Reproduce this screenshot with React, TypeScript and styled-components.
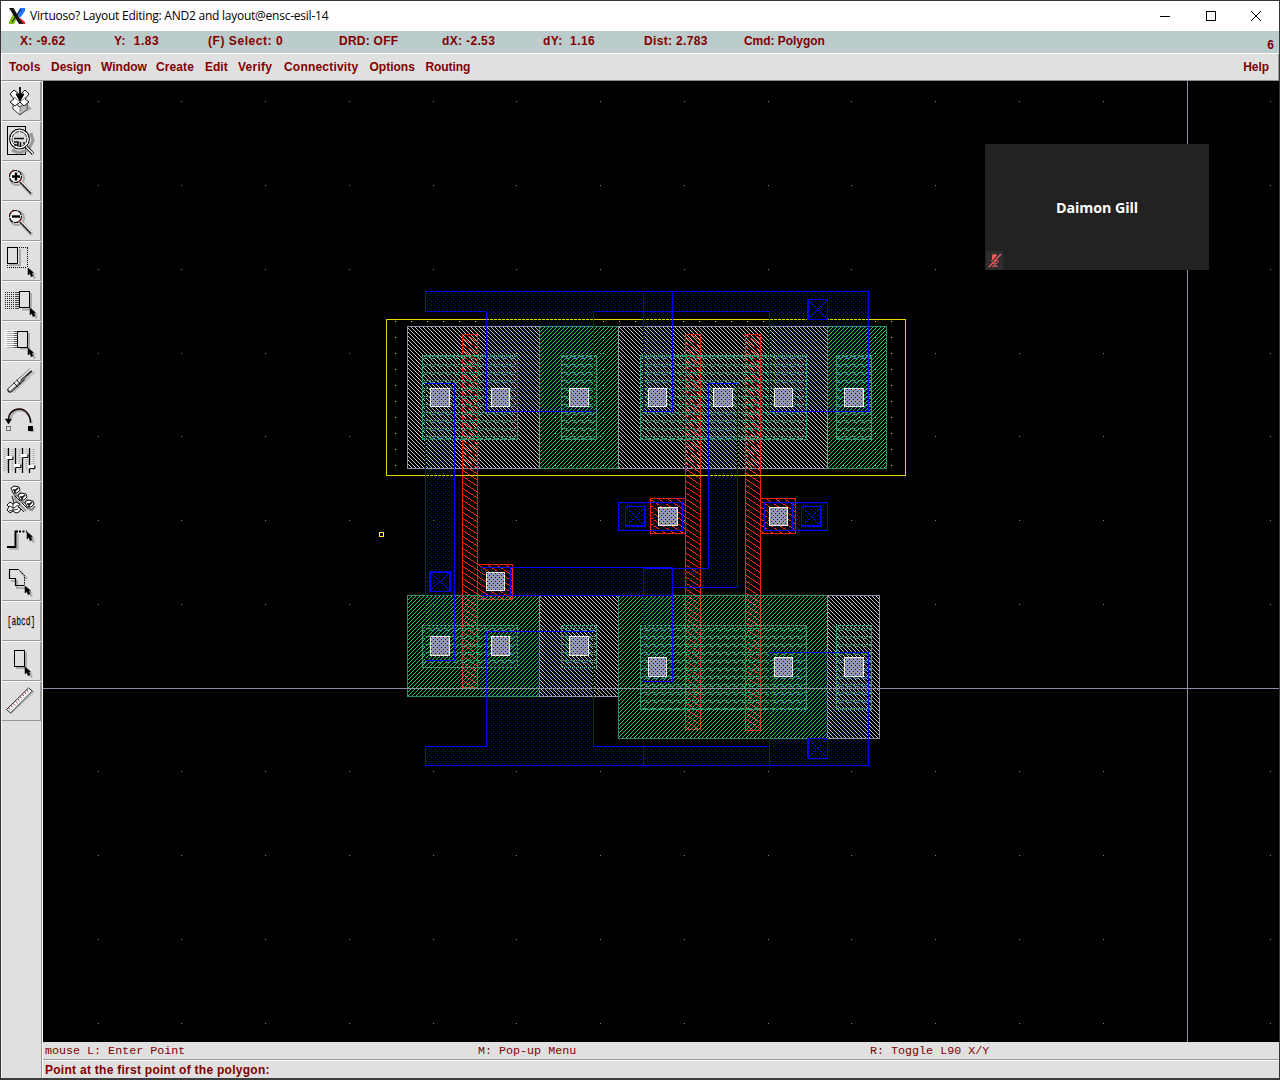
import React from "react";
import styled, { createGlobalStyle } from "styled-components";

const Global = createGlobalStyle`
  * { box-sizing: border-box; }
  html, body { margin: 0; padding: 0; background: #000; }
`;

const maroon = "#800000";
const panel = "#e0e0e0";
const bold = `bold 12px "Liberation Sans", Arial, sans-serif`;

const Window = styled.div`
  width: 1280px;
  height: 1080px;
  display: flex;
  flex-direction: column;
  overflow: hidden;
  background: ${panel};
  border: 1px solid #3b3538;
  border-bottom: 2px solid #3d3d3d;
`;

const TitleBar = styled.header`
  height: 30px;
  flex: none;
  display: flex;
  align-items: center;
  background: #fff;
  padding-left: 8px;
`;

const Title = styled.span<{ $spacing: string }>`
  margin-left: 5px;
  flex: 1;
  font: 12px "Open Sans", "Noto Sans", sans-serif;
  letter-spacing: ${(p) => p.$spacing};
  line-height: 16px;
  padding-bottom: 1px;
  color: #000;
  white-space: pre;
`;

const Controls = styled.div`
  display: flex;
  height: 29px;
`;

const WinButton = styled.div`
  width: 45.5px;
  display: flex;
  align-items: center;
  justify-content: center;
`;

const InfoBar = styled.div`
  height: 23px;
  flex: none;
  display: flex;
  background: #bccbcb;
  border-bottom: 1px solid #fff;
  color: ${maroon};
  font: ${bold};
  line-height: 20px;
  padding-left: 19px;
`;

const InfoItem = styled.span<{ $w: number; $spacing: number }>`
  width: ${(p) => p.$w}px;
  flex: none;
  white-space: pre;
  letter-spacing: ${(p) => p.$spacing}px;
`;

const WindowNumber = styled.span`
  margin-left: auto;
  padding: 4px 5px 0 0;
`;

const MenuBar = styled.nav`
  height: 27px;
  flex: none;
  display: flex;
  color: ${maroon};
  font: ${bold};
  line-height: 27px;
  border-left: 1px solid #fff;
  border-right: 1px solid #999;
  border-bottom: 1px solid #8e8e8e;
  padding: 0 9px 0 7px;
`;

const MenuItem = styled.span<{ $w?: number; $spacing?: number }>`
  ${(p) => (p.$w ? `width: ${p.$w}px;` : "margin-left: auto;")}
  flex: none;
  letter-spacing: ${(p) => p.$spacing ?? 0}px;
`;

const Body = styled.div`
  flex: 1;
  min-height: 0;
  display: flex;
`;

const ToolBar = styled.aside`
  width: 42px;
  flex: none;
  display: flex;
  flex-direction: column;
  border-left: 1px solid #f4f4f4;
  border-right: 1px solid #fff;
`;

const ToolFill = styled.div`
  flex: 1;
  border-right: 1px solid #999;
`;

const ToolButton = styled.div`
  height: 40px;
  flex: none;
  border-top: 1px solid #fff;
  border-right: 2px solid #999;
  border-bottom: 1px solid #999;
  display: flex;

  svg { display: block; overflow: visible; }
`;

const LabelGlyph = styled.span`
  width: 38px;
  height: 38px;
  flex: none;
  display: flex;
  align-items: center;
  justify-content: center;
  font: 13.5px "Liberation Mono", monospace;
  color: #000;
  text-shadow: 1px 1px 0 #bbb;
  transform: scaleX(0.58);
`;

const Main = styled.main`
  flex: 1;
  min-width: 0;
  display: flex;
  flex-direction: column;
`;

const Canvas = styled.div`
  position: relative;
  height: 961px;
  flex: none;
  background: #000;

  > svg { display: block; }
`;

const StatusBar = styled.div`
  height: 18px;
  flex: none;
  display: flex;
  padding-left: 2px;
  border-bottom: 1px solid #999;
  color: ${maroon};
  font: 11.7px "Liberation Mono", monospace;
  line-height: 18px;
  white-space: pre;
`;

const StatusItem = styled.span<{ $w: number }>`
  width: ${(p) => p.$w}px;
  flex: none;
`;

const Prompt = styled.div`
  flex: 1;
  border-top: 1px solid #fff;
  padding-left: 2px;
  color: ${maroon};
  font: ${bold};
  letter-spacing: 0.27px;
  line-height: 18px;
`;

const VideoTile = styled.div`
  position: absolute;
  left: 942px;
  top: 63px;
  width: 224px;
  height: 126px;
  background: #222;
  display: flex;
  align-items: center;
  justify-content: center;
  color: #fff;
  font: bold 14.3px "Open Sans", "Noto Sans", sans-serif;
  letter-spacing: -0.1px;
`;

const Muted = styled.div`
  position: absolute;
  left: 1px;
  bottom: 0;
  width: 17px;
  height: 19px;
  background: #2e2e2e;
`;

/* ---- toolbar icons, drawn in a 38x38 area starting at (2,2) ---- */

const Cursor = ({ x, y }: { x: number; y: number }) => (
  <g transform={`translate(${x} ${y})`}>
    <path d="M2 2l6 5h-2l2 3-2 1-2-3-2 2z" fill="#aaa" />
    <path d="M0 0L0 7L1.7 5.5L3.4 8.6L5 7.8L3.5 5L5.5 4.6z" fill="#000" stroke="#000" strokeWidth=".5" />
  </g>
);

const Lens = ({ plus }: { plus?: boolean }) => (
  <g fill="none">
    <path d="M22 25L32 35" stroke="#b5b5b5" strokeWidth="3" />
    <circle cx="17" cy="18" r="7" stroke="#aaa" strokeWidth="2" />
    <circle cx="15.5" cy="16.5" r="6" fill="#f2f2f2" stroke="#000" strokeWidth="1.2" strokeDasharray="5 1" />
    <path d="M10 14a6 6 0 0 1 4-4M18 22a6 6 0 0 0 3-3" stroke="#8a0000" strokeWidth="1" />
    <path d="M20.5 21.5L31.5 33" stroke="#222" strokeWidth="3" />
    <path d="M21 21L32 32.5" stroke="#fff" strokeWidth="1.2" />
    <path d={plus ? "M12 16.5h8M16 12.5v8" : "M12 16.5h8"} stroke="#000" strokeWidth="2.4" />
  </g>
);

const Nut = ({ x, y }: { x: number; y: number }) => (
  <g transform={`translate(${x} ${y})`}>
    <path d="M-2 4l5 2 3-4" stroke="#888" strokeWidth="2.2" fill="none" />
    <path d="M-4-2l3-2 5 1 1 3-3 3-4 0z" fill="#fff" stroke="#111" strokeWidth="1" />
    <path d="M-2 0h3l2-2M0 0v3" stroke="#111" strokeWidth="1.6" fill="none" />
  </g>
);

const rows = (x: number, x2: number, y: number, n: number) =>
  Array.from({ length: n }, (_, i) => `M${x} ${y + 2 * i}.5H${x2}`).join("");

const icons: React.ReactNode[] = [
  <g strokeLinejoin="miter">
    <path d="M19 35l13-6-5-5-8 7z" fill="#aaa" />
    <path d="M13 22v7l7 6 7-6v-8l-7 6z" fill="#fff" stroke="#333" strokeWidth="1" />
    <path d="M20 27v8l7-6v-8z" fill="#bbb" stroke="#555" strokeWidth=".7" />
    <path d="M10 14l4-4 6 5 5-5 4 4-4 5 4 3-5 4-4-4-5 4-5-4 4-3z" fill="#fff" stroke="#111" strokeWidth="1" />
    <path d="M14 17l6 5 6-5" stroke="#777" fill="none" />
    <path d="M20 7v10" stroke="#000" strokeWidth="1.8" />
    <path d="M16 14h2l2 3 2-3h2l-4 7z" fill="#000" stroke="#000" />
  </g>,
  <g fill="none">
    <rect x="7.5" y="6.5" width="18" height="28" stroke="#000" />
    <path d="M12 30l7 3 9-3 5-9-2-8" stroke="#999" strokeWidth="3" />
    <circle cx="19.5" cy="19" r="9.8" stroke="#111" strokeWidth="1.3" />
    <circle cx="19.5" cy="19" r="8.4" fill="#ddd" stroke="#fff" strokeWidth="1.5" />
    <circle cx="19.5" cy="19" r="7.4" stroke="#222" strokeWidth="1" strokeDasharray="4 1" />
    <path d="M14 18.5h10M20.5 22v5M14 22h4v3h-4M23 23h2" stroke="#111" strokeWidth="1.6" />
    <path d="M26.5 26.5L33 34" stroke="#222" strokeWidth="3.4" />
    <path d="M26 26.5L33 33.5" stroke="#fff" strokeWidth="1.2" />
  </g>,
  <Lens plus />,
  <Lens />,
  <g fill="none">
    <path d="M20 9v16H9" stroke="#aaa" strokeWidth="2" />
    <rect x="7.5" y="7.5" width="10" height="16" stroke="#000" />
    <path d="M19 7.5H28M27.5 8v19M7.5 25v2.5H27" stroke="#000" strokeDasharray="1 1" />
    <Cursor x={28} y={28} />
  </g>,
  <g fill="none">
    <path d={rows(5, 19, 12, 9)} stroke="#222" strokeDasharray="1 1" />
    <path d={rows(15, 19, 12, 9)} stroke="#444" />
    <path d="M22 29.5h9V13" stroke="#aaa" strokeWidth="2" />
    <rect x="19.5" y="11.5" width="10" height="16" stroke="#000" />
    <Cursor x={30} y={28} />
  </g>,
  <g fill="none">
    <path d={rows(4, 17, 10, 9)} stroke="#fff" />
    <path d={rows(7, 17, 11, 9)} stroke="#aaa" />
    <path d={rows(14, 17, 11, 9)} stroke="#555" />
    <path d="M20 28.5h9V13" stroke="#aaa" strokeWidth="2" />
    <rect x="17.5" y="11.5" width="10" height="16" stroke="#000" />
    <Cursor x={28} y={28} />
  </g>,
  <g fill="none" strokeLinecap="round">
    <path d="M13 32L34 12" stroke="#aaa" strokeWidth="3" strokeDasharray="1 1" strokeLinecap="butt" />
    <path d="M10 30L22 19" stroke="#222" strokeWidth="5.4" />
    <path d="M10 29.5L22 18" stroke="#eee" strokeWidth="3.2" />
    <path d="M20 20L31 10" stroke="#222" strokeWidth="4" strokeLinecap="butt" />
    <path d="M19 20L31 9" stroke="#ddd" strokeWidth="2" strokeLinecap="butt" />
    <path d="M11 31L26 17" stroke="#777" strokeWidth="1.3" />
    <path d="M14 23l4 4M17 20l3 4" stroke="#111" strokeWidth="1" />
  </g>,
  <g fill="none">
    <path d="M11 18c2-8 10-9 14-6s6 7 7 11" stroke="#aaa" strokeWidth="2" />
    <path d="M8.5 20c0-7 5-11 11-11s11 6 11 14" stroke="#000" strokeWidth="1.4" />
    <path d="M9 15c2-4 6-6 10-6s8 3 10 6" stroke="#8a0000" strokeWidth="1" strokeDasharray="1 2" />
    <path d="M5.5 19h6l-3 5z" fill="#000" stroke="#000" strokeWidth=".6" />
    <rect x="6.5" y="26.5" width="4" height="4" stroke="#000" strokeDasharray="1 1" />
    <path d="M30 31.5h4V28" stroke="#aaa" />
    <rect x="28" y="26" width="5" height="5" fill="#000" />
  </g>,
  <g fill="none">
    <path d="M4.5 8v24M7.5 9v22M12.5 9v22M19.5 9v22M26.5 9v22M33.5 9v22" stroke="#aaa" strokeDasharray="1 1" strokeWidth="2" />
    <path d="M8.5 8v25M15.5 8v25M22.5 8v25M29.5 8v25" stroke="#000" strokeWidth="1.3" />
    {[[6, 16], [14, 24], [21, 14], [28, 25]].map(([x, y]) => (
      <g key={x}>
        <rect x={x + 1} y={y + 1} width="6" height="3" fill="#777" />
        <rect x={x} y={y} width="6" height="3" fill="#fff" />
        <path d={`M${x + 2} ${y + 3.5}h5v-3`} stroke="#111" />
      </g>
    ))}
  </g>,
  <g fill="none">
    <path d="M15 15v4L26 31" stroke="#999" strokeWidth="2" />
    <path d="M12 16l2 7 5 4 5 5M13 14l14 14" stroke="#111" strokeWidth="1" />
    <Nut x={15} y={10} />
    <Nut x={22} y={17} />
    <Nut x={29} y={24} />
    <path d="M7 25l3-3 3 2 3-2 4 2-2 3 3 2-2 3-3 1-3-2-3 2-3-3 2-3z" fill="#fff" stroke="#111" />
    <path d="M9 26l5 2 4-3M13 24v8M9 31l9-2" stroke="#333" />
  </g>,
  <g fill="none">
    <path d="M9 29h9V14" stroke="#aaa" strokeWidth="1.5" />
    <path d="M7 27H15.5V11.5H18" stroke="#000" strokeWidth="2" />
    <path d="M19 11.5H27" stroke="#000" strokeWidth="2" strokeDasharray="2 1.5" />
    <Cursor x={27} y={12} />
  </g>,
  <g fill="none">
    <path d="M11 21h6v7h8M20 11l7 8" stroke="#aaa" strokeWidth="2" />
    <path d="M24.5 25.5H15.5V18.5H9.5V9.5H18.5" stroke="#000" strokeWidth="1.2" />
    <path d="M18.5 9.5L24.5 15.5V25" stroke="#000" strokeDasharray="1.5 1" />
    <Cursor x={25} y={26} />
  </g>,
  null,
  <g fill="none">
    <path d="M16 28h10V12" stroke="#aaa" strokeWidth="2" />
    <rect x="14.5" y="10.5" width="10" height="16" stroke="#000" />
    <Cursor x={25} y={27} />
  </g>,
  <g fill="none">
    <path d="M11 33L34 12" stroke="#aaa" strokeWidth="2" strokeDasharray="1 1" />
    <path d="M6.5 29.5L28.5 8L32.5 11L10.5 33z" fill="#fff" stroke="#222" strokeWidth="1" />
    <path d="M9 29L28.5 10" stroke="#8a3030" strokeWidth="1.6" strokeDasharray="1 2.2" />
    <path d="M10.5 30L30 11.5" stroke="#555" strokeWidth="1" strokeDasharray="1 2" />
  </g>,
];

/* ---- layout geometry; each box is [x1, y1, x2, y2] in window pixels ---- */

type Box = [number, number, number, number];

const outline = ([a, b, c, d]: Box) => ({ x: a + 0.5, y: b + 0.5, width: c - a, height: d - b });

const Boxes = ({ items, fill, stroke }: { items: Box[]; fill: string; stroke: string }) => (
  <>
    {items.map((b, i) => (
      <rect key={i} {...outline(b)} fill={`url(#${fill})`} stroke={stroke} />
    ))}
  </>
);

const nImplant: Box[] = [[407, 326, 539, 468], [618, 326, 827, 468], [539, 595, 618, 696], [827, 595, 879, 738]];
const pImplant: Box[] = [[539, 326, 618, 468], [827, 326, 886, 468], [407, 595, 539, 696], [618, 595, 827, 738]];
const diffusion: Box[] = [
  [422, 355, 517, 439], [561, 355, 596, 439], [640, 355, 806, 439], [836, 355, 871, 439],
  [422, 625, 517, 667], [561, 625, 596, 667], [640, 625, 806, 709], [836, 625, 871, 709],
];
const poly: Box[] = [
  [462, 334, 477, 687], [685, 334, 700, 729], [745, 334, 760, 730],
  [650, 498, 685, 533], [760, 498, 795, 533], [477, 564, 512, 599],
];
const metal: Box[] = [
  [643, 291, 672, 411], [425, 383, 454, 660], [481, 567, 672, 595], [643, 567, 672, 681],
  [618, 502, 682, 530], [764, 502, 827, 530],
];
const contacts: Box[] = [
  [430, 388, 449, 406], [491, 388, 509, 406], [569, 388, 588, 406], [648, 388, 666, 406],
  [713, 388, 732, 406], [774, 388, 792, 406], [844, 388, 863, 406],
  [658, 507, 677, 525], [769, 507, 787, 525], [486, 572, 504, 590],
  [430, 636, 449, 655], [491, 636, 509, 655], [569, 636, 588, 655],
  [648, 657, 666, 676], [774, 657, 792, 676], [844, 657, 863, 676],
];
const pins: { box: Box; heavy: string; faint?: boolean }[] = [
  { box: [807, 299, 827, 319], heavy: "M808.5 299v20" },
  { box: [625, 506, 645, 526], heavy: "M644.5 506v20M625 525.5h20", faint: true },
  { box: [801, 506, 821, 526], heavy: "M820.5 506v20M801 525.5h20", faint: true },
  { box: [429, 571, 450, 591], heavy: "M430.5 571v20M449.5 571v20M429 572.5h21" },
  { box: [807, 738, 827, 758], heavy: "M808.5 738v20", faint: true },
];
const gridX = [98, 181, 265, 349, 433, 516, 600, 684, 768, 851, 935, 1019, 1103, 1270];
const gridY = [101, 185, 269, 353, 436, 520, 604, 771, 855, 939, 1023];

const px = (pts: number[][]) => pts.map(([x, y]) => `M${x} ${y}h1v1h-1z`).join("");

const polyDiag = Array.from({ length: 9 }, (_, i) => [i, Math.floor((i * 2) / 3)]);

/* pixel-stepped diagonals of a pin marker; faint ones leave out every third step */
const cross = ([x1, y1, x2, y2]: Box, faint?: boolean) => {
  const n = x2 - x1;
  const pts: number[][] = [];
  for (let i = 1; i < n; i++) {
    if (faint && i % 3 === 0) continue;
    const y = Math.round((i * (y2 - y1)) / n);
    pts.push([x1 + i, y1 + y], [x1 + i, y2 - y]);
  }
  return px(pts);
};

const LayoutView = () => (
  <svg width="1236" height="961" viewBox="43 81 1236 961" shapeRendering="crispEdges">
    <defs>
      <pattern id="metal" patternUnits="userSpaceOnUse" x="3" y="1" width="4" height="4">
        <path d={px([[0, 0], [2, 2]])} fill="#0000ff" />
      </pattern>
      <pattern id="nimp" patternUnits="userSpaceOnUse" width="4" height="4">
        <path d={px([[0, 0], [1, 1], [2, 2], [3, 3]])} fill="#c8c8c8" />
      </pattern>
      <pattern id="pimp" patternUnits="userSpaceOnUse" width="4" height="4">
        <path d={px([[3, 0], [2, 1], [1, 2], [0, 3]])} fill="#14c864" />
      </pattern>
      <pattern id="poly" patternUnits="userSpaceOnUse" width="9" height="6">
        <path d={px(polyDiag)} fill="#ff2814" />
      </pattern>
      <pattern id="diff" patternUnits="userSpaceOnUse" x="2" y="4" width="8" height="8">
        <path d="M0 0h5v1h-5zM4 1h1v2h-1zM5 2h3v1h-3zM7 1h1v1h-1z" fill="#329678" />
      </pattern>
      <pattern id="well" patternUnits="userSpaceOnUse" x="395" y="321" width="16" height="16">
        <path d="M0 0h1v1h-1z" fill="#e6dc00" />
      </pattern>
      <pattern id="cut" patternUnits="userSpaceOnUse" x="3" y="1" width="4" height="4">
        <rect width="4" height="4" fill="#9696b4" />
        <path d={px([[0, 0], [2, 2]])} fill="#0000dc" />
      </pattern>
    </defs>

    <path d={px(gridX.flatMap((x) => gridY.map((y) => [x, y])))} fill="#82828c" />

    <Boxes items={nImplant} fill="nimp" stroke="#9191a5" />
    <Boxes items={poly} fill="poly" stroke="#eb1e0a" />
    <Boxes items={pImplant} fill="pimp" stroke="#288c6e" />
    <Boxes items={diffusion} fill="diff" stroke="#32966e" />
    <path d="M539.5 326V469M618.5 326V469M827.5 326V469M539.5 595V697M827.5 595V739" stroke="#9191a5" />
    <path d="M387 320h518v6H387zM387 326h20v149H387zM887 326h18v149H887zM540 326h78v142H540zM828 326h58v142H828z" fill="url(#well)" />
    <rect x="386.5" y="319.5" width="519" height="156" fill="none" stroke="#e6d200" />

    <path
      d="M425.5 291.5H868.5V411.5H769.5V311.5H593.5V411.5H486.5V311.5H425.5z"
      fill="url(#metal)" stroke="#0000ff"
    />
    <path
      d="M425.5 746.5H486.5V631.5H593.5V746.5H769.5V652.5H868.5V765.5H425.5z"
      fill="url(#metal)" stroke="#0000ff"
    />
    <path d="M643.5 568.5H708.5V383.5H737.5V587.5H643.5z" fill="url(#metal)" />
    <path d="M643.5 568.5H708.5V383.5H737.5V587.5H672" fill="none" stroke="#0000ff" />
    <Boxes items={metal} fill="metal" stroke="#0000ff" />
    <path d="M643.5 746V765M769.5 746V765M653.5 502V530M792.5 502V530M510.5 567V595" stroke="#0000ff" />

    {pins.map(({ box, heavy, faint }) => (
      <g key={box.join()}>
        <rect {...outline(box)} fill="none" stroke="#0000ff" />
        <path d={heavy} fill="none" stroke="#0000ff" />
        <path d={cross(box, faint)} fill="#0000ff" />
      </g>
    ))}

    <path d="M43 688.5H1279M1187.5 81V1042" stroke="#8c8ca8" />

    {contacts.map((b) => (
      <g key={b.join()}>
        <rect {...outline(b)} fill="url(#cut)" stroke="#c8c8e6" />
        <rect {...outline(b)} fill="none" stroke="#fff" strokeDasharray="3 1" />
      </g>
    ))}

    <rect x="379.5" y="532.5" width="4" height="4" fill="none" stroke="#ffff00" />
  </svg>
);

const menus: [string, number, number][] = [
  ["Tools", 42, 0.05], ["Design", 50, 0], ["Window", 55, 0], ["Create", 49, 0.1], ["Edit", 33, 0],
  ["Verify", 46, 0.25], ["Connectivity", 85.5, 0.2], ["Options", 56, 0], ["Routing", 60, -0.1],
];

const info: [string, number, number][] = [
  ["X: -9.62", 94, 0.35], ["Y:  1.83", 94, 0.5], ["(F) Select: 0", 131, 0.55], ["DRD: OFF", 103, 0.25],
  ["dX: -2.53", 101, 0.35], ["dY:  1.16", 101, 0.4], ["Dist: 2.783", 100, 0.35], ["Cmd: Polygon", 100, -0.05],
];

export default function App() {
  return (
    <>
      <Global />
      <Window>
        <TitleBar>
          <svg width="16" height="16" viewBox="0 0 16 16">
            <path d="M11 0h5v3l-5 7-3-4z" fill="#1e78ff" />
            <path d="M4 6l4 4-3 6H0v-2z" fill="#78be14" />
            <path d="M11 10l5 4v2h-5z" fill="#e61e1e" />
            <path d="M0 0h4.5l9.5 16h-4z" fill="#111" />
            <path d="M12 1L3 14" stroke="#111" strokeWidth="1" />
          </svg>
          <Title $spacing="-0.24px">Virtuoso? Layout Editing: AND2 and layout@ensc-esil-14</Title>
          <Controls>
            <WinButton><svg width="10" height="10"><path d="M0 5.5H10" stroke="#000" /></svg></WinButton>
            <WinButton><svg width="10" height="10"><rect x=".5" y=".5" width="9" height="9" fill="none" stroke="#000" /></svg></WinButton>
            <WinButton><svg width="10" height="10"><path d="M0 0L10 10M10 0L0 10" stroke="#000" /></svg></WinButton>
          </Controls>
        </TitleBar>
        <InfoBar>
          {info.map(([t, w, s]) => <InfoItem key={t} $w={w} $spacing={s}>{t}</InfoItem>)}
          <WindowNumber>6</WindowNumber>
        </InfoBar>
        <MenuBar>
          {menus.map(([t, w, s]) => <MenuItem key={t} $w={w} $spacing={s}>{t}</MenuItem>)}
          <MenuItem $spacing={-0.05}>Help</MenuItem>
        </MenuBar>
        <Body>
          <ToolBar>
            {icons.map((icon, i) => (
              <ToolButton key={i}>
                {icon ? <svg width="38" height="38" viewBox="2 2 38 38">{icon}</svg> : <LabelGlyph>[abcd]</LabelGlyph>}
              </ToolButton>
            ))}
            <ToolFill />
          </ToolBar>
          <Main>
            <Canvas>
              <LayoutView />
              <VideoTile>
                Daimon Gill
                <Muted>
                  <svg width="17" height="19" viewBox="0 0 17 19" fill="none" stroke="#f05a5a">
                    <rect x="6" y="3" width="5" height="8" rx="2" fill="#f05a5a" stroke="none" />
                    <path d="M5.5 9c0 5 7 5 7 0M9 12.5V15M6 15.2h6" />
                    <path d="M2.5 15.5L14.5 2.5" stroke="#2e2e2e" strokeWidth="2.4" />
                    <path d="M3 16L15 3" strokeWidth="1.4" />
                  </svg>
                </Muted>
              </VideoTile>
            </Canvas>
            <StatusBar>
              <StatusItem $w={433}>mouse L: Enter Point</StatusItem>
              <StatusItem $w={392}>M: Pop-up Menu</StatusItem>
              <StatusItem $w={200}>R: Toggle L90 X/Y</StatusItem>
            </StatusBar>
            <Prompt>Point at the first point of the polygon:</Prompt>
          </Main>
        </Body>
      </Window>
    </>
  );
}
